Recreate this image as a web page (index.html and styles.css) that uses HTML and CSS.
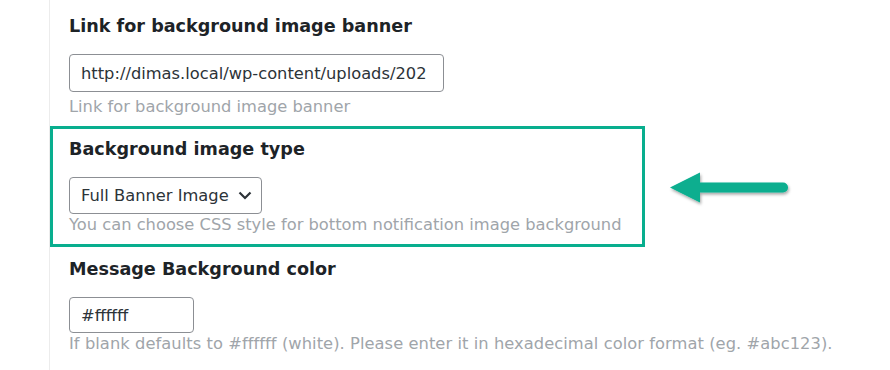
FILE: index.html
```html
<!DOCTYPE html>
<html>
<head>
<meta charset="utf-8">
<link rel="stylesheet" href="styles.css">
</head>
<body>
<div class="page">
  <div class="rail"></div>
  <div class="content">
    <div class="field first">
      <div class="label">Link for background image banner</div>
      <div class="input url">http://dimas.local/wp-content/uploads/202</div>
      <div class="desc">Link for background image banner</div>
    </div>
    <div class="highlight-row">
      <div class="field boxed">
        <div class="label">Background image type</div>
        <div class="select"><span>Full Banner Image</span>
          <svg class="chev" width="14" height="9" viewBox="0 0 14 9"><path d="M1.5 1.5 L7 7 L12.5 1.5" fill="none" stroke="#2c3338" stroke-width="2.2"/></svg>
        </div>
        <div class="desc flush">You can choose CSS style for bottom notification image background</div>
      </div>
      <svg class="arrow" width="130" height="44" viewBox="0 0 130 44">
        <defs>
          <filter id="sh" x="-20%" y="-40%" width="140%" height="180%">
            <feDropShadow dx="1" dy="2" stdDeviation="1.6" flood-color="#000" flood-opacity="0.35"/>
          </filter>
        </defs>
        <g filter="url(#sh)">
          <path d="M4 22.5 L34 7.5 L34 17.5 L117 17.5 A5 5 0 0 1 117 27.5 L34 27.5 L34 37.5 Z" fill="#07ae8f"/>
        </g>
      </svg>
    </div>
    <div class="field last">
      <div class="label">Message Background color</div>
      <div class="input color">#ffffff</div>
      <div class="desc flush wide">If blank defaults to #ffffff (white). Please enter it in hexadecimal color format (eg. #abc123).</div>
    </div>
  </div>
</div>
</body>
</html>
```

FILE: styles.css
```css
html, body {
  margin: 0;
  padding: 0;
  background: #fff;
}
body {
  font-family: "DejaVu Sans", Verdana, sans-serif;
  width: 890px;
  height: 370px;
  overflow: hidden;
}
.page {
  display: flex;
  height: 370px;
}
.rail {
  width: 49px;
  flex: none;
  border-right: 1px solid #ececec;
}
.content {
  flex: 1;
  display: flex;
  flex-direction: column;
}
.field {
  padding-left: 19px;
}
.first {
  padding-top: 14px;
  padding-bottom: 8px;
}
.label {
  font-weight: bold;
  font-size: 17.6px;
  line-height: 24px;
  color: #1d2327;
  white-space: nowrap;
}
.input, .select {
  box-sizing: border-box;
  border: 1px solid #8c8f94;
  border-radius: 4px;
  font-size: 16.3px;
  color: #2c3338;
  padding: 0 11px;
  display: flex;
  align-items: center;
  white-space: nowrap;
  overflow: hidden;
}
.url {
  width: 375px;
  height: 38px;
  margin-top: 16px;
}
.desc {
  font-size: 16.3px;
  line-height: 22px;
  color: #a0a5aa;
  margin-top: 4px;
  white-space: nowrap;
}
.flush {
  margin-top: 0;
}
.wide {
  letter-spacing: 0.06px;
}
.highlight-row {
  display: flex;
  align-items: center;
}
.boxed {
  border: 3px solid #08ae8e;
  width: 595px;
  box-sizing: border-box;
  padding: 8px 0 8px 16px;
}
.select {
  width: 193px;
  height: 37px;
  margin-top: 16px;
  justify-content: space-between;
  padding-right: 9px;
}
.arrow {
  margin-left: 21px;
}
.last {
  padding-top: 10px;
}
.color {
  width: 125px;
  height: 36px;
  margin-top: 16px;
}
```
